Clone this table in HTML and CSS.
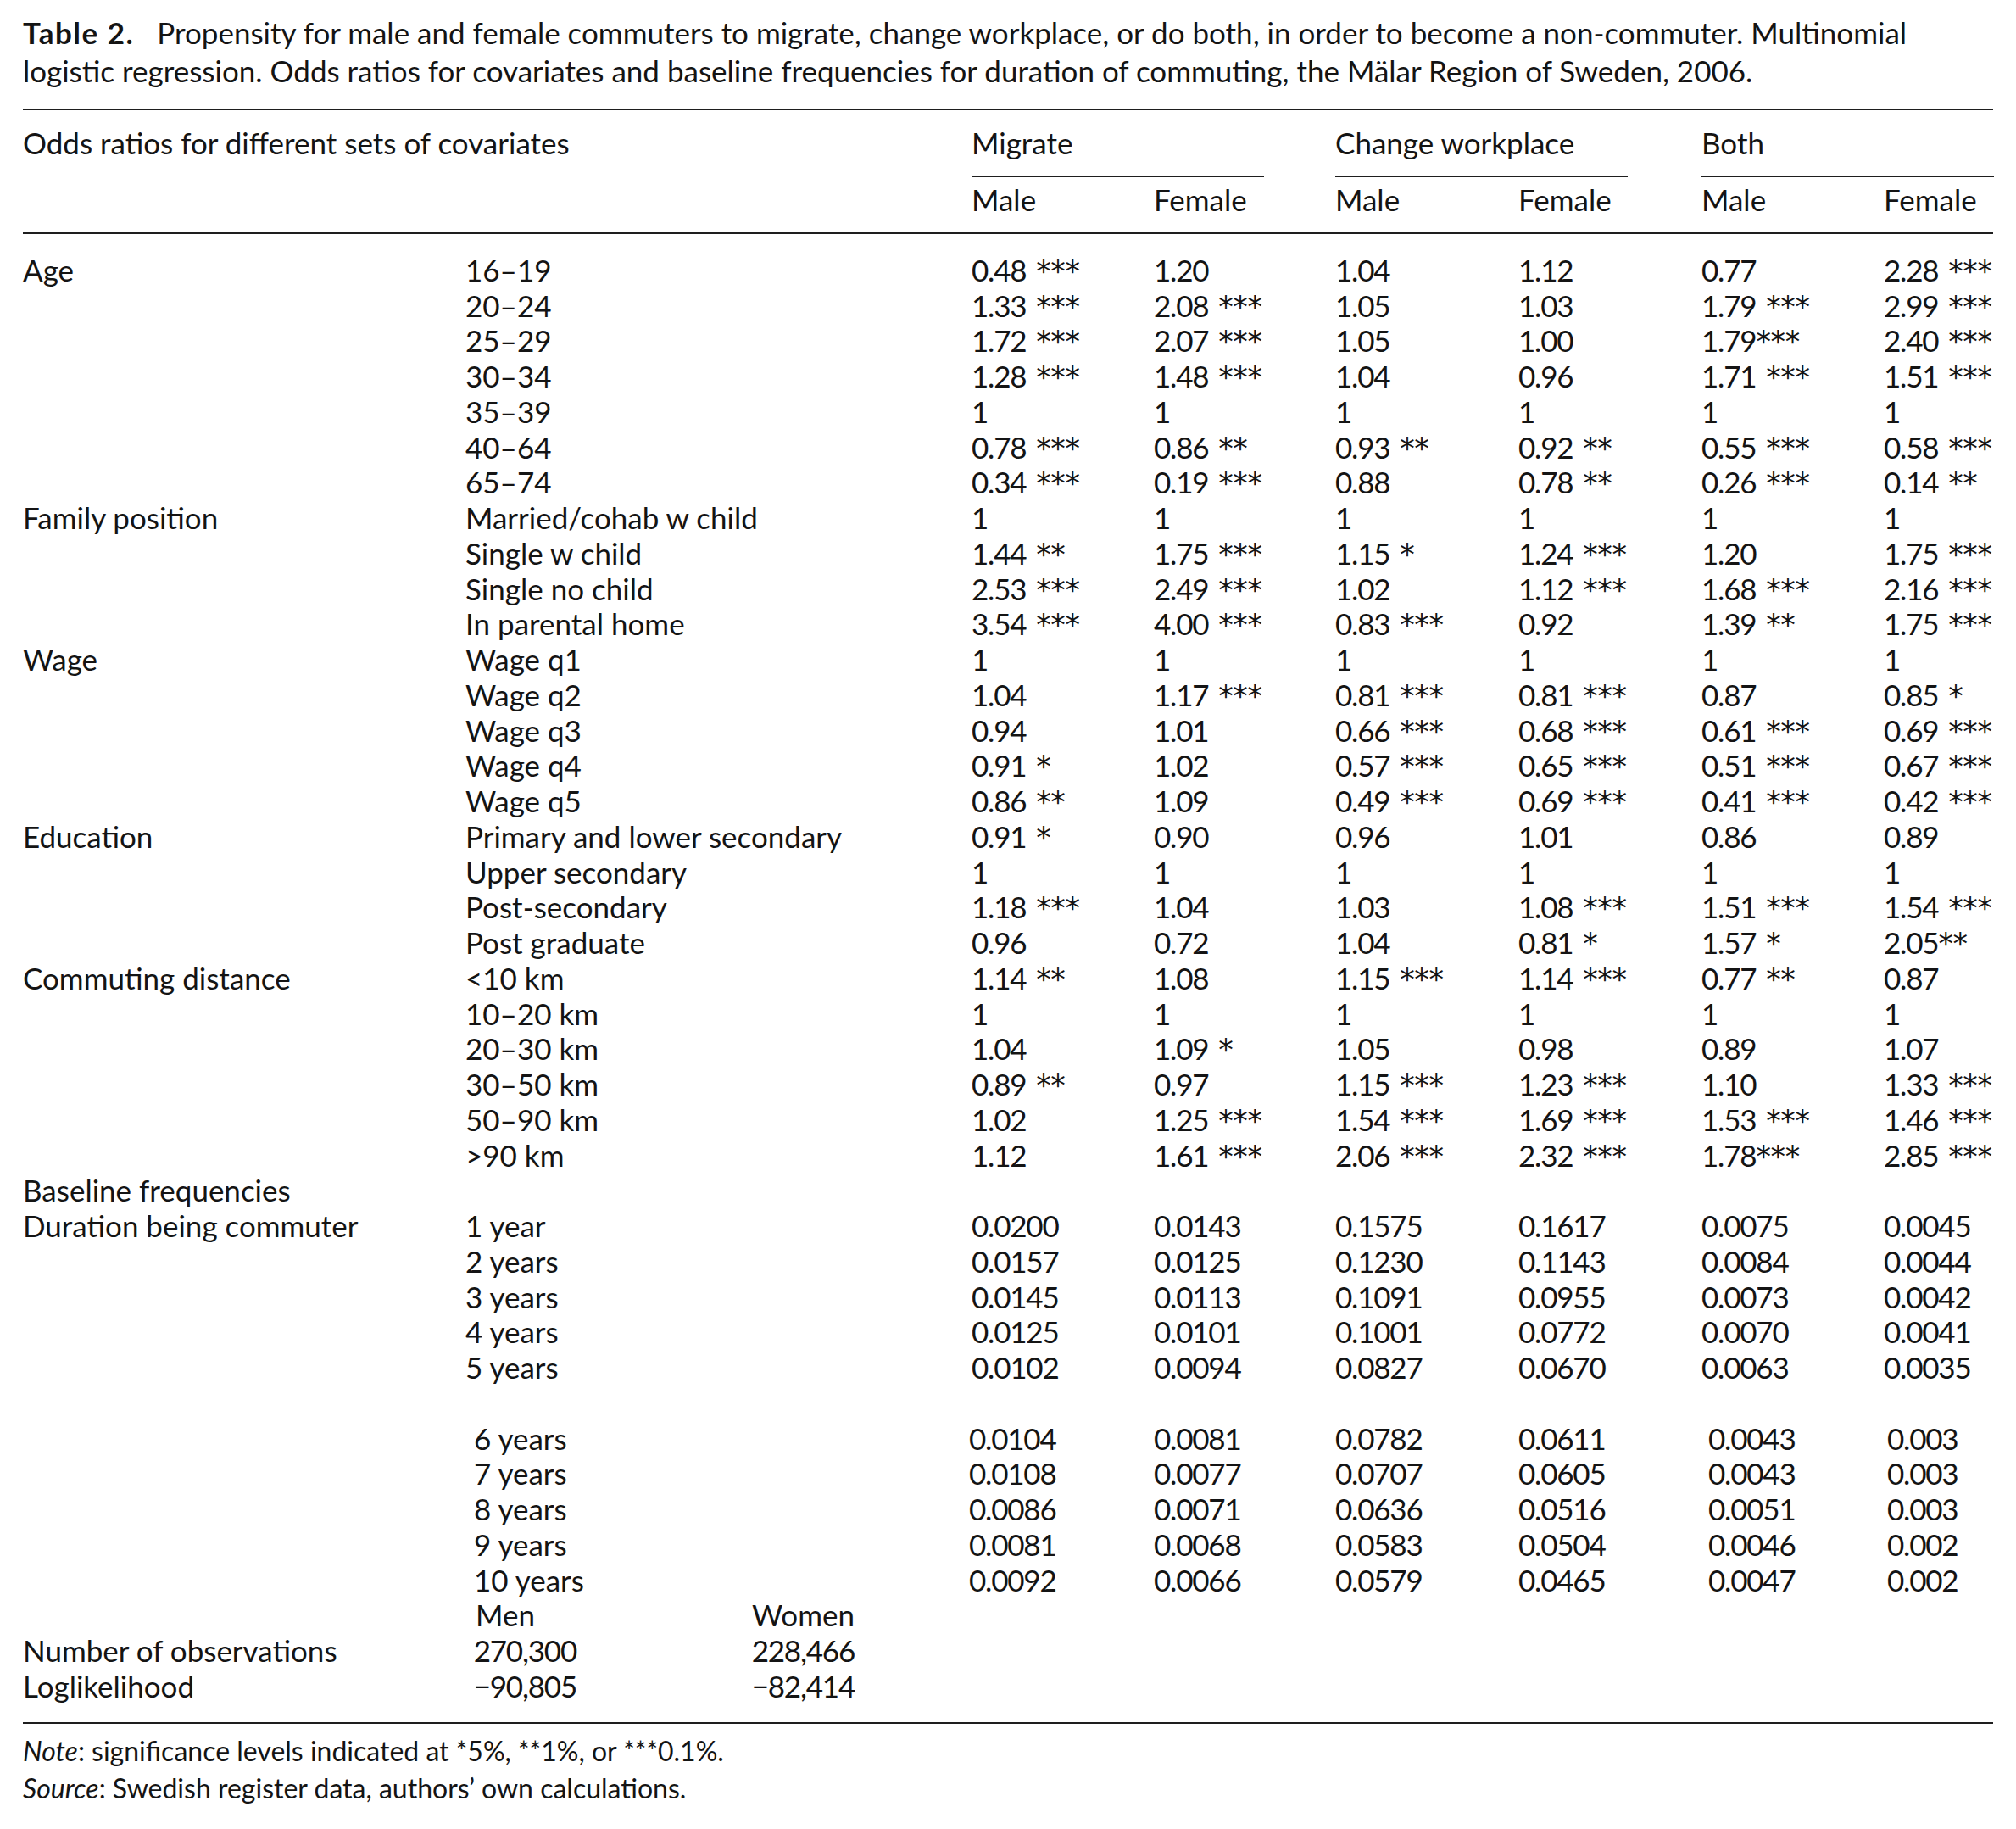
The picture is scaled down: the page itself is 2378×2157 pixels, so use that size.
FILE: index.html
```html
<!DOCTYPE html>
<html lang="en">
<head>
<meta charset="utf-8">
<title>Table 2</title>
<link rel="stylesheet" href="styles.css">
</head>
<body>
<div class="page">
  <p class="caption">
    <span class="cap-line"><b class="cap-no">Table 2.</b><span>Propensity for male and female commuters to migrate, change workplace, or do both, in order to become a non-commuter. Multinomial</span></span>
    <span class="cap-line"><span>logistic regression. Odds ratios for covariates and baseline frequencies for duration of commuting, the Mälar Region of Sweden, 2006.</span></span>
  </p>

  <div class="tbl">
    <div class="rule"></div>
    <div class="row head1">
      <span class="span2">Odds ratios for different sets of covariates</span>
      <span class="span2"><span class="grp">Migrate</span></span>
      <span class="span2"><span class="grp">Change workplace</span></span>
      <span class="span2"><span class="grp">Both</span></span>
    </div>
    <div class="row head2">
      <span></span><span></span>
      <span>Male</span><span>Female</span>
      <span>Male</span><span>Female</span>
      <span>Male</span><span>Female</span>
    </div>
    <div class="rule"></div>

    <div class="body">
      <div class="row"><span>Age</span><span class="lab">16–19</span><span class="n">0.48 <span class="s">***</span></span><span class="n">1.20</span><span class="n">1.04</span><span class="n">1.12</span><span class="n">0.77</span><span class="n">2.28 <span class="s">***</span></span></div>
      <div class="row"><span></span><span class="lab">20–24</span><span class="n">1.33 <span class="s">***</span></span><span class="n">2.08 <span class="s">***</span></span><span class="n">1.05</span><span class="n">1.03</span><span class="n">1.79 <span class="s">***</span></span><span class="n">2.99 <span class="s">***</span></span></div>
      <div class="row"><span></span><span class="lab">25–29</span><span class="n">1.72 <span class="s">***</span></span><span class="n">2.07 <span class="s">***</span></span><span class="n">1.05</span><span class="n">1.00</span><span class="n">1.79<span class="s tight">***</span></span><span class="n">2.40 <span class="s">***</span></span></div>
      <div class="row"><span></span><span class="lab">30–34</span><span class="n">1.28 <span class="s">***</span></span><span class="n">1.48 <span class="s">***</span></span><span class="n">1.04</span><span class="n">0.96</span><span class="n">1.71 <span class="s">***</span></span><span class="n">1.51 <span class="s">***</span></span></div>
      <div class="row"><span></span><span class="lab">35–39</span><span class="n">1</span><span class="n">1</span><span class="n">1</span><span class="n">1</span><span class="n">1</span><span class="n">1</span></div>
      <div class="row"><span></span><span class="lab">40–64</span><span class="n">0.78 <span class="s">***</span></span><span class="n">0.86 <span class="s">**</span></span><span class="n">0.93 <span class="s">**</span></span><span class="n">0.92 <span class="s">**</span></span><span class="n">0.55 <span class="s">***</span></span><span class="n">0.58 <span class="s">***</span></span></div>
      <div class="row"><span></span><span class="lab">65–74</span><span class="n">0.34 <span class="s">***</span></span><span class="n">0.19 <span class="s">***</span></span><span class="n">0.88</span><span class="n">0.78 <span class="s">**</span></span><span class="n">0.26 <span class="s">***</span></span><span class="n">0.14 <span class="s">**</span></span></div>

      <div class="row"><span>Family position</span><span class="lab">Married/cohab w child</span><span class="n">1</span><span class="n">1</span><span class="n">1</span><span class="n">1</span><span class="n">1</span><span class="n">1</span></div>
      <div class="row"><span></span><span class="lab">Single w child</span><span class="n">1.44 <span class="s">**</span></span><span class="n">1.75 <span class="s">***</span></span><span class="n">1.15 <span class="s">*</span></span><span class="n">1.24 <span class="s">***</span></span><span class="n">1.20</span><span class="n">1.75 <span class="s">***</span></span></div>
      <div class="row"><span></span><span class="lab">Single no child</span><span class="n">2.53 <span class="s">***</span></span><span class="n">2.49 <span class="s">***</span></span><span class="n">1.02</span><span class="n">1.12 <span class="s">***</span></span><span class="n">1.68 <span class="s">***</span></span><span class="n">2.16 <span class="s">***</span></span></div>
      <div class="row"><span></span><span class="lab">In parental home</span><span class="n">3.54 <span class="s">***</span></span><span class="n">4.00 <span class="s">***</span></span><span class="n">0.83 <span class="s">***</span></span><span class="n">0.92</span><span class="n">1.39 <span class="s">**</span></span><span class="n">1.75 <span class="s">***</span></span></div>

      <div class="row"><span>Wage</span><span class="lab">Wage q1</span><span class="n">1</span><span class="n">1</span><span class="n">1</span><span class="n">1</span><span class="n">1</span><span class="n">1</span></div>
      <div class="row"><span></span><span class="lab">Wage q2</span><span class="n">1.04</span><span class="n">1.17 <span class="s">***</span></span><span class="n">0.81 <span class="s">***</span></span><span class="n">0.81 <span class="s">***</span></span><span class="n">0.87</span><span class="n">0.85 <span class="s">*</span></span></div>
      <div class="row"><span></span><span class="lab">Wage q3</span><span class="n">0.94</span><span class="n">1.01</span><span class="n">0.66 <span class="s">***</span></span><span class="n">0.68 <span class="s">***</span></span><span class="n">0.61 <span class="s">***</span></span><span class="n">0.69 <span class="s">***</span></span></div>
      <div class="row"><span></span><span class="lab">Wage q4</span><span class="n">0.91 <span class="s">*</span></span><span class="n">1.02</span><span class="n">0.57 <span class="s">***</span></span><span class="n">0.65 <span class="s">***</span></span><span class="n">0.51 <span class="s">***</span></span><span class="n">0.67 <span class="s">***</span></span></div>
      <div class="row"><span></span><span class="lab">Wage q5</span><span class="n">0.86 <span class="s">**</span></span><span class="n">1.09</span><span class="n">0.49 <span class="s">***</span></span><span class="n">0.69 <span class="s">***</span></span><span class="n">0.41 <span class="s">***</span></span><span class="n">0.42 <span class="s">***</span></span></div>

      <div class="row"><span>Education</span><span class="lab">Primary and lower secondary</span><span class="n">0.91 <span class="s">*</span></span><span class="n">0.90</span><span class="n">0.96</span><span class="n">1.01</span><span class="n">0.86</span><span class="n">0.89</span></div>
      <div class="row"><span></span><span class="lab">Upper secondary</span><span class="n">1</span><span class="n">1</span><span class="n">1</span><span class="n">1</span><span class="n">1</span><span class="n">1</span></div>
      <div class="row"><span></span><span class="lab">Post-secondary</span><span class="n">1.18 <span class="s">***</span></span><span class="n">1.04</span><span class="n">1.03</span><span class="n">1.08 <span class="s">***</span></span><span class="n">1.51 <span class="s">***</span></span><span class="n">1.54 <span class="s">***</span></span></div>
      <div class="row"><span></span><span class="lab">Post graduate</span><span class="n">0.96</span><span class="n">0.72</span><span class="n">1.04</span><span class="n">0.81 <span class="s">*</span></span><span class="n">1.57 <span class="s">*</span></span><span class="n">2.05<span class="s tight">**</span></span></div>

      <div class="row"><span>Commuting distance</span><span class="lab">&lt;10 km</span><span class="n">1.14 <span class="s">**</span></span><span class="n">1.08</span><span class="n">1.15 <span class="s">***</span></span><span class="n">1.14 <span class="s">***</span></span><span class="n">0.77 <span class="s">**</span></span><span class="n">0.87</span></div>
      <div class="row"><span></span><span class="lab">10–20 km</span><span class="n">1</span><span class="n">1</span><span class="n">1</span><span class="n">1</span><span class="n">1</span><span class="n">1</span></div>
      <div class="row"><span></span><span class="lab">20–30 km</span><span class="n">1.04</span><span class="n">1.09 <span class="s">*</span></span><span class="n">1.05</span><span class="n">0.98</span><span class="n">0.89</span><span class="n">1.07</span></div>
      <div class="row"><span></span><span class="lab">30–50 km</span><span class="n">0.89 <span class="s">**</span></span><span class="n">0.97</span><span class="n">1.15 <span class="s">***</span></span><span class="n">1.23 <span class="s">***</span></span><span class="n">1.10</span><span class="n">1.33 <span class="s">***</span></span></div>
      <div class="row"><span></span><span class="lab">50–90 km</span><span class="n">1.02</span><span class="n">1.25 <span class="s">***</span></span><span class="n">1.54 <span class="s">***</span></span><span class="n">1.69 <span class="s">***</span></span><span class="n">1.53 <span class="s">***</span></span><span class="n">1.46 <span class="s">***</span></span></div>
      <div class="row"><span></span><span class="lab">&gt;90 km</span><span class="n">1.12</span><span class="n">1.61 <span class="s">***</span></span><span class="n">2.06 <span class="s">***</span></span><span class="n">2.32 <span class="s">***</span></span><span class="n">1.78<span class="s tight">***</span></span><span class="n">2.85 <span class="s">***</span></span></div>

      <div class="row"><span>Baseline frequencies</span></div>
      <div class="row"><span>Duration being commuter</span><span class="lab">1 year</span><span class="n">0.0200</span><span class="n">0.0143</span><span class="n">0.1575</span><span class="n">0.1617</span><span class="n">0.0075</span><span class="n">0.0045</span></div>
      <div class="row"><span></span><span class="lab">2 years</span><span class="n">0.0157</span><span class="n">0.0125</span><span class="n">0.1230</span><span class="n">0.1143</span><span class="n">0.0084</span><span class="n">0.0044</span></div>
      <div class="row"><span></span><span class="lab">3 years</span><span class="n">0.0145</span><span class="n">0.0113</span><span class="n">0.1091</span><span class="n">0.0955</span><span class="n">0.0073</span><span class="n">0.0042</span></div>
      <div class="row"><span></span><span class="lab">4 years</span><span class="n">0.0125</span><span class="n">0.0101</span><span class="n">0.1001</span><span class="n">0.0772</span><span class="n">0.0070</span><span class="n">0.0041</span></div>
      <div class="row"><span></span><span class="lab">5 years</span><span class="n">0.0102</span><span class="n">0.0094</span><span class="n">0.0827</span><span class="n">0.0670</span><span class="n">0.0063</span><span class="n">0.0035</span></div>
      <div class="row blank"></div>
      <div class="row late"><span></span><span class="lab">6 years</span><span class="n">0.0104</span><span class="n">0.0081</span><span class="n">0.0782</span><span class="n">0.0611</span><span class="n">0.0043</span><span class="n">0.003</span></div>
      <div class="row late"><span></span><span class="lab">7 years</span><span class="n">0.0108</span><span class="n">0.0077</span><span class="n">0.0707</span><span class="n">0.0605</span><span class="n">0.0043</span><span class="n">0.003</span></div>
      <div class="row late"><span></span><span class="lab">8 years</span><span class="n">0.0086</span><span class="n">0.0071</span><span class="n">0.0636</span><span class="n">0.0516</span><span class="n">0.0051</span><span class="n">0.003</span></div>
      <div class="row late"><span></span><span class="lab">9 years</span><span class="n">0.0081</span><span class="n">0.0068</span><span class="n">0.0583</span><span class="n">0.0504</span><span class="n">0.0046</span><span class="n">0.002</span></div>
      <div class="row late"><span></span><span class="lab">10 years</span><span class="n">0.0092</span><span class="n">0.0066</span><span class="n">0.0579</span><span class="n">0.0465</span><span class="n">0.0047</span><span class="n">0.002</span></div>

      <div class="row"><span></span><span class="split"><span class="men men-lab">Men</span><span class="women">Women</span></span></div>
      <div class="row"><span>Number of observations</span><span class="split"><span class="men n">270,300</span><span class="women n">228,466</span></span></div>
      <div class="row"><span>Loglikelihood</span><span class="split"><span class="men n">−90,805</span><span class="women n">−82,414</span></span></div>
    </div>
    <div class="rule"></div>
  </div>

  <div class="notes">
    <p><i>Note</i>: significance levels indicated at *5%, **1%, or ***0.1%.</p>
    <p><i>Source</i>: Swedish register data, authors’ own calculations.</p>
  </div>
</div>
</body>
</html>
```
FILE: styles.css
```css
html, body {
  margin: 0;
  padding: 0;
  background: #ffffff;
}

body {
  color: #141414;
  font-family: Lato, "Liberation Sans", "Noto Sans", sans-serif;
  font-size: 35px;
}

.page {
  width: 2324px;
  padding: 16px 0 0 27px;
}

.caption {
  margin: 0;
  line-height: 45px;
}

.cap-line {
  display: block;
  white-space: nowrap;
}

.cap-no {
  font-weight: 700;
  letter-spacing: 1.5px;
  margin-right: 27px;
}

.tbl {
  margin-top: 22px;
}

.rule {
  height: 2px;
  background: #1e1e1e;
}

.row {
  display: grid;
  grid-template-columns: 522px 597px 215px 214px 216px 216px 215px 129px;
  height: 41.75px;
  line-height: 41.75px;
  white-space: nowrap;
}

.row > span {
  display: block;
}

.span2 {
  grid-column: span 2;
}

.head1 {
  height: auto;
  padding-top: 17.6px;
}

.grp {
  display: block;
  width: 345px;
  padding-bottom: 17.6px;
  border-bottom: 2px solid #1e1e1e;
}

.head2 {
  padding: 6px 0 17.25px;
}

.body {
  padding: 21.9px 0 21.35px;
}

.n {
  letter-spacing: -1.2px;
}

.s {
  font-family: "DejaVu Sans", sans-serif;
  letter-spacing: -0.3px;
  line-height: 0;
  margin-left: 4px;
}

.s.tight {
  margin-left: 0;
}

.late .lab {
  padding-left: 10px;
}

.late > span:nth-child(3) {
  margin-left: -3px;
}

.late > span:nth-child(7) {
  padding-left: 8px;
}

.late > span:nth-child(8) {
  padding-left: 4px;
}

.row > .split {
  display: flex;
}

.split .men {
  width: 131px;
  text-align: right;
}

.split .men-lab {
  text-align: left;
  padding-left: 12px;
  box-sizing: border-box;
}

.split .women {
  width: 328px;
  text-align: right;
}

.notes {
  padding-top: 10px;
  font-size: 32px;
  line-height: 44px;
}

.notes p {
  margin: 0;
}
```
